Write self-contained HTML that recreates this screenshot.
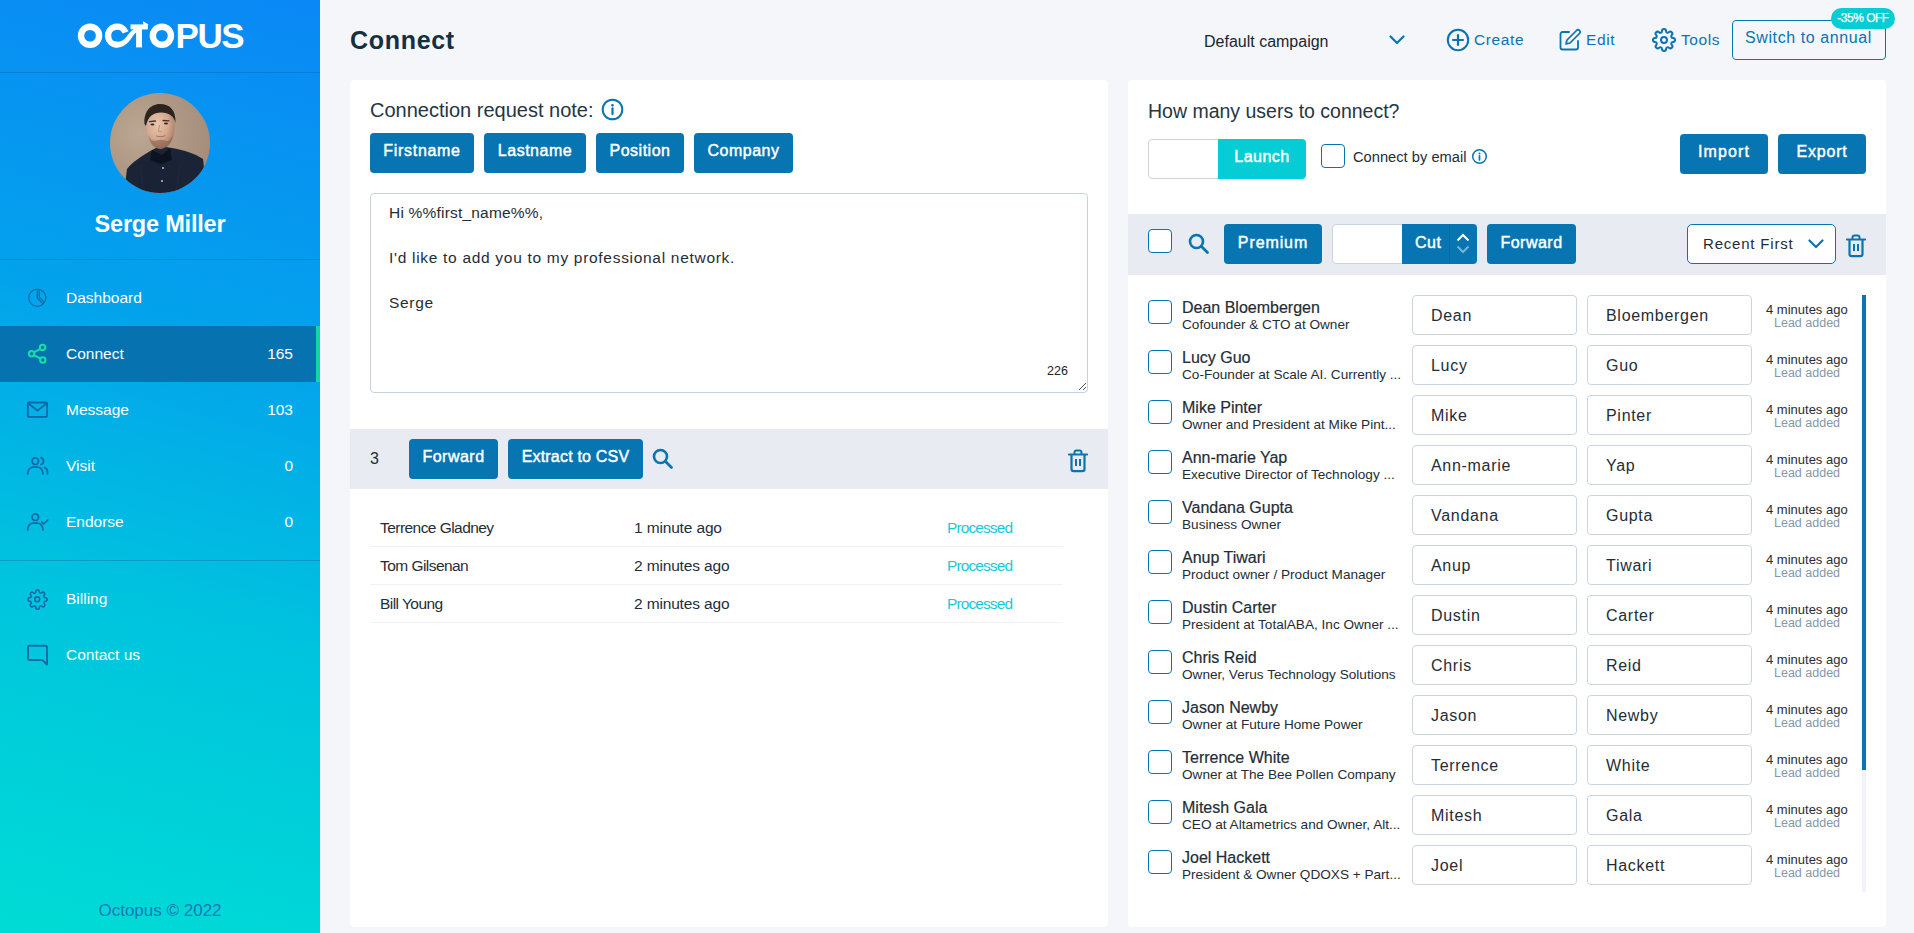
<!DOCTYPE html>
<html><head><meta charset="utf-8">
<style>
*{box-sizing:border-box;margin:0;padding:0}
html,body{width:1914px;height:933px;overflow:hidden;background:#f4f6fa;font-family:"Liberation Sans",sans-serif;color:#1e2a33}
.a{position:absolute}
.t{position:absolute;white-space:nowrap;line-height:1}
#side{position:absolute;left:0;top:0;width:320px;height:933px;background:linear-gradient(195deg,#0a88f6 0%,#03a2ec 35%,#00c4de 65%,#00dcd5 100%);overflow:hidden}
.hr{position:absolute;left:0;width:320px;height:1px;background:rgba(10,90,150,.35)}
.mi{position:absolute;left:0;width:320px;height:56px}
.mi .lbl{position:absolute;left:66px;top:0;line-height:56px;font-size:15.5px;color:#fff}
.mi .cnt{position:absolute;right:27px;top:0;line-height:56px;font-size:15.5px;color:#fff}
.mi svg{position:absolute;left:27px;top:18px}
.btn{position:absolute;background:#0675b1;border-radius:4px;color:#fff;font-weight:400;font-size:16px;-webkit-text-stroke:.45px #fff;text-align:center;height:40px;line-height:36px;letter-spacing:.5px}
.card{position:absolute;background:#fff;border-radius:4px}
.inp{position:absolute;background:#fff;border:1px solid #c9d6de;border-radius:4px}
.chk{position:absolute;width:24px;height:24px;border:1.5px solid #0a74b0;border-radius:4px;background:#fff}
</style></head><body>

<div id="side">
  <svg class="a" style="left:70px;top:15px" width="180" height="40" viewBox="0 0 180 40">
<circle cx="20.05" cy="20.75" r="9.05" fill="none" stroke="#fff" stroke-width="6.4"/>
<path d="M55.6 17.4 A9.1 9.1 0 1 0 47 29.8" fill="none" stroke="#fff" stroke-width="6.4"/>
<path d="M46.5 32.75 C53 32.75 57 29 60.5 24.5 C63.5 20.5 66.5 15.5 72 14.3 L77 14.3 L77 11.8 L70 11.8 C64 12.5 60.5 16.5 57 21 C54 25 51.5 26.85 46.5 26.85 Z" fill="#fff"/>
<rect x="60.5" y="9.4" width="17.4" height="4.9" fill="#fff"/>
<rect x="66.1" y="13" width="5.9" height="19.4" fill="#fff"/>
<path d="M73 6.2 L78.6 9.6 L73.6 11.5 Z" fill="#fff"/>
<circle cx="91.9" cy="20.75" r="9.05" fill="none" stroke="#fff" stroke-width="6.4"/>
<text x="105.6" y="32.8" font-family="Liberation Sans" font-weight="700" font-size="35" fill="#fff" letter-spacing="-1.5">PUS</text>
</svg>
  <div class="hr" style="top:72px"></div>
  <svg class="a" style="left:110px;top:93px" width="100" height="100" viewBox="0 0 100 100">
<defs><clipPath id="av"><circle cx="50" cy="50" r="50"/></clipPath>
<radialGradient id="bgg" cx="30%" cy="40%" r="80%"><stop offset="0" stop-color="#bba793"/><stop offset="1" stop-color="#a28a77"/></radialGradient>
<radialGradient id="face" cx="40%" cy="38%" r="65%"><stop offset="0" stop-color="#e9c6b0"/><stop offset=".6" stop-color="#d4a88f"/><stop offset="1" stop-color="#a87c66"/></radialGradient></defs>
<g clip-path="url(#av)">
<rect width="100" height="100" fill="url(#bgg)"/>
<path d="M14 100 L17 76 C22 69 32 63 42 57 L50 53 L62 55 C73 57 84 60 93 66 L97 100 Z" fill="#1a2436"/>
<path d="M36 32 C36 21 42 16 49.5 16 C58 16 63.5 21 64.5 31 C65.5 43 61 53 51 56 C42 56 37 47 36 32 Z" fill="url(#face)"/>
<path d="M34.5 31 C33.5 17 42 11 50 11 C60 11 66 17 65.5 30 C64 23 59 19.5 51 19.5 C43.5 19.5 38 23 36 33 Z" fill="#2e241f"/>
<path d="M38.5 42 C40 51 45 56 51 56.5 C57 56 61.5 51 63 42 C61 47 58 49.5 55 47.5 C52 46.5 49 46.5 46 47.5 C43 49 40 47 38.5 42Z" fill="#7a5646" opacity=".5"/>
<path d="M39.5 28.6 L45.5 28 M53 27.5 L59 27.8" stroke="#4a3428" stroke-width="1.3" stroke-linecap="round"/>
<ellipse cx="42.5" cy="31.5" rx="2" ry="1" fill="#3b2a22"/><ellipse cx="56" cy="30.6" rx="2" ry="1" fill="#3b2a22"/>
<path d="M49.5 32 L48.5 38.5 L52 38.8" fill="none" stroke="#b88a72" stroke-width=".8"/>
<path d="M46.5 43 C49 44 52 44 55 42.8" fill="none" stroke="#9a6a58" stroke-width=".9" stroke-linecap="round"/>
<path d="M42 57 L52 62 L60 55 L62 67 L51 71 L40 67Z" fill="#0c131e"/>
<path d="M30 72 L34 100 M70 70 L66 100" stroke="#26334a" stroke-width=".6" opacity=".6"/>
<circle cx="53" cy="75" r=".9" fill="#cfd6e0"/><circle cx="52" cy="88" r=".9" fill="#cfd6e0"/>
</g></svg>
  <div class="t" style="left:0;width:320px;text-align:center;top:213px;font-size:23.5px;font-weight:700;color:#fff;letter-spacing:-.2px">Serge Miller</div>
  <div class="hr" style="top:259px"></div>

  <div class="mi" style="top:270px"><span class="lbl">Dashboard</span></div>
  <div class="mi" style="top:326px;background:#0673b0"><span class="lbl">Connect</span><span class="cnt">165</span><div class="a" style="right:0;top:0;width:4px;height:56px;background:#12d6a8"></div></div>
  <div class="mi" style="top:382px"><span class="lbl">Message</span><span class="cnt">103</span></div>
  <div class="mi" style="top:438px"><span class="lbl">Visit</span><span class="cnt">0</span></div>
  <div class="mi" style="top:494px"><span class="lbl">Endorse</span><span class="cnt">0</span></div>
  <div class="hr" style="top:560px"></div>
  <div class="mi" style="top:571px"><span class="lbl">Billing</span></div>
  <div class="mi" style="top:627px"><span class="lbl">Contact us</span></div>
  <svg class="a" style="left:27px;top:288px" width="21" height="21" viewBox="0 0 21 21"><circle cx="10.3" cy="9.8" r="8.6" fill="none" stroke="#0b69a8" stroke-width="1.2"/><path d="M10.3 1.2V10L16 15.8" fill="none" stroke="#0b69a8" stroke-width="1.2"/><path d="M12.3 1.4V9.3L17.3 14.3" fill="none" stroke="#0b69a8" stroke-width="1.2"/></svg>
  <svg class="a" style="left:26px;top:343px" width="22" height="22" viewBox="0 0 22 22"><circle cx="16.6" cy="4.5" r="2.7" fill="none" stroke="#17dfa9" stroke-width="2"/><circle cx="5.6" cy="10.7" r="2.7" fill="none" stroke="#17dfa9" stroke-width="2"/><circle cx="16.8" cy="17" r="2.7" fill="none" stroke="#17dfa9" stroke-width="2"/><path d="M8 9.3l6.3-3.5M8 12.1l6.4 3.6" stroke="#17dfa9" stroke-width="2"/></svg>
  <svg class="a" style="left:26px;top:400px" width="23" height="19" viewBox="0 0 23 19"><rect x="1.8" y="2.5" width="19.3" height="14.3" rx="1.3" fill="none" stroke="#0b69a8" stroke-width="1.8"/><path d="M2.5 3.5l9 7 9-7" fill="none" stroke="#0b69a8" stroke-width="1.8"/></svg>
  <svg class="a" style="left:26px;top:455px" width="24" height="22" viewBox="0 0 24 22"><circle cx="9.3" cy="6.2" r="3.3" fill="none" stroke="#0b69a8" stroke-width="1.7"/><path d="M1.8 19v-1.3a5.5 5.5 0 0 1 5.5-5.5h4a5.5 5.5 0 0 1 5.5 5.5V19" fill="none" stroke="#0b69a8" stroke-width="1.7" stroke-linecap="round"/><path d="M15 2.8a3.5 3.5 0 0 1 0 6.7" fill="none" stroke="#0b69a8" stroke-width="1.7" stroke-linecap="round"/><path d="M18.5 12.5a5 5 0 0 1 3 4.6V19" fill="none" stroke="#0b69a8" stroke-width="1.7" stroke-linecap="round"/></svg>
  <svg class="a" style="left:26px;top:511px" width="24" height="22" viewBox="0 0 24 22"><circle cx="9.3" cy="6.2" r="3.3" fill="none" stroke="#0b69a8" stroke-width="1.7"/><path d="M1.8 19v-1.3a5.5 5.5 0 0 1 5.5-5.5h4a5.5 5.5 0 0 1 5.5 5.5V19" fill="none" stroke="#0b69a8" stroke-width="1.7" stroke-linecap="round"/><path d="M15.8 11l2 2 4-4" fill="none" stroke="#0b69a8" stroke-width="1.7" stroke-linecap="round" stroke-linejoin="round"/></svg>
  <svg class="a" style="left:27px;top:589px" width="21" height="21" viewBox="0 0 24 24"><circle cx="11.7" cy="11.8" r="2.8" fill="none" stroke="#0b69a8" stroke-width="1.8"/><path d="M19.4 15a1.65 1.65 0 0 0 .33 1.82l.06.06a2 2 0 0 1-2.83 2.83l-.06-.06a1.65 1.65 0 0 0-1.820-.33 1.65 1.65 0 0 0-1 1.51V21a2 2 0 0 1-4 0v-.09A1.65 1.65 0 0 0 9 19.4a1.65 1.65 0 0 0-1.82.33l-.06.06a2 2 0 0 1-2.83-2.83l.06-.06A1.65 1.65 0 0 0 4.68 15a1.65 1.65 0 0 0-1.51-1H3a2 2 0 0 1 0-4h.09A1.65 1.65 0 0 0 4.6 9a1.65 1.65 0 0 0-.33-1.82l-.06-.06a2 2 0 0 1 2.83-2.83l.06.06A1.65 1.65 0 0 0 9 4.68a1.65 1.65 0 0 0 1-1.51V3a2 2 0 0 1 4 0v.09a1.65 1.65 0 0 0 1 1.51 1.65 1.65 0 0 0 1.82-.33l.06-.06a2 2 0 0 1 2.83 2.83l-.06.06A1.65 1.65 0 0 0 19.4 9a1.65 1.65 0 0 0 1.51 1H21a2 2 0 0 1 0 4h-.09a1.65 1.65 0 0 0-1.51 1z" fill="none" stroke="#0b69a8" stroke-width="1.8"/></svg>
  <svg class="a" style="left:26px;top:644px" width="23" height="22" viewBox="0 0 23 22"><path d="M3.5 1.8h16a1.5 1.5 0 0 1 1.5 1.5V20.5L16.3 16H3.5A1.5 1.5 0 0 1 2 14.5V3.3A1.5 1.5 0 0 1 3.5 1.8z" fill="none" stroke="#0b69a8" stroke-width="1.9" stroke-linejoin="round"/></svg>
  <div class="t" style="left:0;width:320px;text-align:center;top:902px;font-size:17px;color:#1878b6">Octopus © 2022</div>
</div>

<!-- header -->
<div class="t" style="left:350px;top:28px;font-size:25px;font-weight:700;color:#15303f;letter-spacing:.7px">Connect</div>


<div class="t" style="left:1204px;top:34px;font-size:16px;color:#1b2530">Default campaign</div>
<svg class="a" style="left:1389px;top:35px" width="16" height="10" viewBox="0 0 16 10"><path d="M1.5 1.5 L8 8 L14.5 1.5" fill="none" stroke="#0a74b0" stroke-width="2.2" stroke-linecap="round" stroke-linejoin="round"/></svg>
<svg class="a" style="left:1446px;top:28px" width="24" height="24" viewBox="0 0 24 24"><circle cx="12" cy="12" r="10.2" fill="none" stroke="#0a74b0" stroke-width="2"/><path d="M12 7v10M7 12h10" stroke="#0a74b0" stroke-width="2.2" stroke-linecap="round"/></svg>
<div class="t" style="left:1474px;top:32px;font-size:15.5px;color:#0a74b0;letter-spacing:.6px">Create</div>
<svg class="a" style="left:1558px;top:28px" width="24" height="24" viewBox="0 0 24 24"><path d="M11 4H4.5a2 2 0 0 0-2 2v13.5a2 2 0 0 0 2 2H18a2 2 0 0 0 2-2V13" fill="none" stroke="#0a74b0" stroke-width="1.8" stroke-linecap="round"/><path d="M18.5 2.5a2.1 2.1 0 0 1 3 3L12 15l-4 1 1-4z" fill="none" stroke="#0a74b0" stroke-width="1.7" stroke-linejoin="round"/></svg>
<div class="t" style="left:1586px;top:32px;font-size:15.5px;color:#0a74b0;letter-spacing:.6px">Edit</div>
<svg class="a" style="left:1652px;top:28px" width="24" height="24" viewBox="0 0 24 24"><circle cx="12" cy="12" r="3" fill="none" stroke="#0a74b0" stroke-width="2"/><path d="M19.4 15a1.65 1.65 0 0 0 .33 1.82l.06.06a2 2 0 0 1-2.83 2.83l-.06-.06a1.65 1.65 0 0 0-1.82-.33 1.65 1.65 0 0 0-1 1.51V21a2 2 0 0 1-4 0v-.09A1.65 1.65 0 0 0 9 19.4a1.65 1.65 0 0 0-1.82.33l-.06.06a2 2 0 0 1-2.83-2.830l.06-.06A1.65 1.65 0 0 0 4.68 15a1.65 1.65 0 0 0-1.510-1H3a2 2 0 0 1 0-4h.09A1.65 1.65 0 0 0 4.600 9a1.65 1.65 0 0 0-.33-1.82l-.06-.06a2 2 0 0 1 2.83-2.83l.06.06A1.65 1.65 0 0 0 9 4.68a1.65 1.65 0 0 0 1-1.51V3a2 2 0 0 1 4 0v.09a1.65 1.65 0 0 0 1 1.51 1.65 1.65 0 0 0 1.82-.33l.06-.06a2 2 0 0 1 2.83 2.83l-.06.06A1.65 1.65 0 0 0 19.4 9a1.65 1.65 0 0 0 1.51 1H21a2 2 0 0 1 0 4h-.09a1.65 1.65 0 0 0-1.51 1z" fill="none" stroke="#0a74b0" stroke-width="2"/></svg>
<div class="t" style="left:1681px;top:32px;font-size:15.5px;color:#0a74b0;letter-spacing:.6px">Tools</div>
<div class="a" style="left:1732px;top:20px;width:154px;height:40px;border:1.5px solid #0a74b0;border-radius:4px"></div>
<div class="t" style="left:1745px;top:30px;font-size:16px;color:#0a74b0;letter-spacing:.6px">Switch to annual</div>
<div class="a" style="left:1831px;top:8px;width:64px;height:21px;border-radius:11px;background:#06ccd4;color:#fff;font-size:12px;line-height:21px;text-align:center;letter-spacing:-.5px;-webkit-text-stroke:.25px #fff">-35% OFF</div>

<!-- LEFT CARD -->
<div class="card" style="left:350px;top:80px;width:758px;height:847px"></div>


<div class="t" style="left:370px;top:100px;font-size:20px;color:#26353f">Connection request note:</div>
<svg class="a" style="left:601px;top:98px" width="23" height="23" viewBox="0 0 23 23"><circle cx="11.5" cy="11.5" r="9.8" fill="none" stroke="#0a74b0" stroke-width="2"/><circle cx="11.5" cy="7.3" r="1.3" fill="#0a74b0"/><path d="M11.5 10.3v5.8" stroke="#0a74b0" stroke-width="2.2" stroke-linecap="round"/></svg>
<div class="btn" style="left:370px;top:133px;width:104px;letter-spacing:.7px">Firstname</div>
<div class="btn" style="left:484px;top:133px;width:102px">Lastname</div>
<div class="btn" style="left:596px;top:133px;width:88px">Position</div>
<div class="btn" style="left:694px;top:133px;width:99px">Company</div>
<div class="inp" style="left:370px;top:193px;width:718px;height:200px;border-color:#c6d3dc"></div>
<div class="t" style="left:389px;top:205px;font-size:15.5px;color:#1f2d36;letter-spacing:.2px">Hi %%first_name%%,</div>
<div class="t" style="left:389px;top:250px;font-size:15.5px;color:#1f2d36;letter-spacing:.7px">I'd like to add you to my professional network.</div>
<div class="t" style="left:389px;top:295px;font-size:15.5px;color:#1f2d36;letter-spacing:.7px">Serge</div>
<div class="t" style="left:1047px;top:365px;font-size:12.5px;color:#222">226</div>
<svg class="a" style="left:1077px;top:381px" width="10" height="10" viewBox="0 0 10 10"><path d="M9 2L2 9M9 6L6 9" stroke="#555" stroke-width="1"/></svg>

<div class="a" style="left:350px;top:429px;width:758px;height:60px;background:#e8ebf2"></div>
<div class="t" style="left:370px;top:451px;font-size:16px;color:#1f2d36">3</div>
<div class="btn" style="left:409px;top:439px;width:89px">Forward</div>
<div class="btn" style="left:508px;top:439px;width:135px;letter-spacing:.2px">Extract to CSV</div>
<svg class="a" style="left:651px;top:447px" width="24" height="24" viewBox="0 0 24 24"><circle cx="9.5" cy="9.5" r="6.5" fill="none" stroke="#0a74b0" stroke-width="2.6"/><path d="M14.5 14.5L20.5 20.5" stroke="#0a74b0" stroke-width="2.8" stroke-linecap="round"/></svg>
<svg class="a" style="left:1066px;top:448px" width="24" height="26" viewBox="0 0 24 26"><path d="M3 6.5h18" stroke="#0a74b0" stroke-width="2.2" stroke-linecap="round"/><path d="M8.5 6V4.5a2 2 0 0 1 2-2h3a2 2 0 0 1 2 2V6" fill="none" stroke="#0a74b0" stroke-width="2"/><path d="M5.5 7v14a2.2 2.2 0 0 0 2.2 2.2h8.6a2.2 2.2 0 0 0 2.2-2.2V7" fill="none" stroke="#0a74b0" stroke-width="2.2"/><path d="M10 11v7M14 11v7" stroke="#0a74b0" stroke-width="2"/></svg>

<div class="t" style="left:380px;top:520px;font-size:15.5px;color:#1f2d36;letter-spacing:-.55px">Terrence Gladney</div>
<div class="t" style="left:634px;top:520px;font-size:15.5px;color:#1f2d36;letter-spacing:-.15px">1 minute ago</div>
<div class="t" style="left:947px;top:520px;font-size:15.5px;color:#1bc8d8;letter-spacing:-.9px">Processed</div>
<div class="a" style="left:370px;top:546px;width:693px;height:1px;background:#f0f2f6"></div>
<div class="t" style="left:380px;top:558px;font-size:15.5px;color:#1f2d36;letter-spacing:-.55px">Tom Gilsenan</div>
<div class="t" style="left:634px;top:558px;font-size:15.5px;color:#1f2d36;letter-spacing:-.15px">2 minutes ago</div>
<div class="t" style="left:947px;top:558px;font-size:15.5px;color:#1bc8d8;letter-spacing:-.9px">Processed</div>
<div class="a" style="left:370px;top:584px;width:693px;height:1px;background:#f0f2f6"></div>
<div class="t" style="left:380px;top:596px;font-size:15.5px;color:#1f2d36;letter-spacing:-.55px">Bill Young</div>
<div class="t" style="left:634px;top:596px;font-size:15.5px;color:#1f2d36;letter-spacing:-.15px">2 minutes ago</div>
<div class="t" style="left:947px;top:596px;font-size:15.5px;color:#1bc8d8;letter-spacing:-.9px">Processed</div>
<div class="a" style="left:370px;top:622px;width:693px;height:1px;background:#f0f2f6"></div>

<!-- RIGHT CARD -->
<div class="card" style="left:1128px;top:80px;width:758px;height:847px"></div>


<div class="t" style="left:1148px;top:102px;font-size:19.5px;color:#26353f">How many users to connect?</div>
<div class="inp" style="left:1148px;top:139px;width:74px;height:40px;border-radius:4px 0 0 4px"></div>
<div class="a" style="left:1218px;top:139px;width:88px;height:40px;background:#06cdd5;border-radius:0 4px 4px 0;color:#fff;font-size:16px;-webkit-text-stroke:.45px #fff;line-height:36px;text-align:center;letter-spacing:.5px">Launch</div>
<div class="chk" style="left:1321px;top:144px"></div>
<div class="t" style="left:1353px;top:150px;font-size:14.7px;color:#1f2d36">Connect by email</div>
<svg class="a" style="left:1471px;top:148px" width="17" height="17" viewBox="0 0 17 17"><circle cx="8.5" cy="8.5" r="6.8" fill="none" stroke="#0a74b0" stroke-width="1.5"/><circle cx="8.5" cy="5.6" r="1" fill="#0a74b0"/><path d="M8.5 7.8v4.2" stroke="#0a74b0" stroke-width="1.7" stroke-linecap="round"/></svg>
<div class="btn" style="left:1680px;top:134px;width:88px;line-height:36px;letter-spacing:1.1px">Import</div>
<div class="btn" style="left:1778px;top:134px;width:88px;line-height:36px;letter-spacing:.8px">Export</div>

<div class="a" style="left:1128px;top:214px;width:758px;height:61px;background:#e8ebf2"></div>
<div class="chk" style="left:1148px;top:229px"></div>
<svg class="a" style="left:1187px;top:232px" width="24" height="24" viewBox="0 0 24 24"><circle cx="9.5" cy="9.5" r="6.5" fill="none" stroke="#0a74b0" stroke-width="2.6"/><path d="M14.5 14.5L20.5 20.5" stroke="#0a74b0" stroke-width="2.8" stroke-linecap="round"/></svg>
<div class="btn" style="left:1224px;top:224px;width:98px;line-height:37px;letter-spacing:.9px">Premium</div>
<div class="inp" style="left:1332px;top:224px;width:74px;height:40px;border-radius:4px 0 0 4px"></div>
<div class="a" style="left:1402px;top:224px;width:75px;height:40px;background:#0675b1;border-radius:0 4px 4px 0"></div>
<div class="a" style="left:1449px;top:224px;width:1px;height:40px;background:rgba(0,0,0,.07)"></div>
<div class="t" style="left:1415px;top:235px;font-size:16px;color:#fff;-webkit-text-stroke:.45px #fff;letter-spacing:.5px">Cut</div>
<svg class="a" style="left:1455px;top:232px" width="16" height="23" viewBox="0 0 16 23"><path d="M2.5 8.5L8 3l5.5 5.5" fill="none" stroke="#fff" stroke-width="2"/><path d="M2.5 14.5L8 20l5.5-5.5" fill="none" stroke="rgba(255,255,255,.45)" stroke-width="2"/></svg>
<div class="btn" style="left:1487px;top:224px;width:89px;line-height:37px">Forward</div>
<div class="a" style="left:1687px;top:224px;width:149px;height:40px;border:1.5px solid #0a74b0;border-radius:5px;background:#fff"></div>
<div class="t" style="left:1703px;top:236px;font-size:15px;color:#1f2d36;letter-spacing:.8px">Recent First</div>
<svg class="a" style="left:1808px;top:239px" width="16" height="10" viewBox="0 0 16 10"><path d="M1.5 1.5L8 8l6.5-6.5" fill="none" stroke="#0a74b0" stroke-width="2.2" stroke-linecap="round" stroke-linejoin="round"/></svg>
<svg class="a" style="left:1844px;top:233px" width="24" height="26" viewBox="0 0 24 26"><path d="M3 6.5h18" stroke="#0a74b0" stroke-width="2.2" stroke-linecap="round"/><path d="M8.5 6V4.5a2 2 0 0 1 2-2h3a2 2 0 0 1 2 2V6" fill="none" stroke="#0a74b0" stroke-width="2"/><path d="M5.5 7v14a2.2 2.2 0 0 0 2.2 2.2h8.6a2.2 2.2 0 0 0 2.2-2.2V7" fill="none" stroke="#0a74b0" stroke-width="2.2"/><path d="M10 11v7M14 11v7" stroke="#0a74b0" stroke-width="2"/></svg>

<div class="a" style="left:1862px;top:295px;width:4px;height:597px;background:#f1f3f8"></div>
<div class="a" style="left:1862px;top:295px;width:4px;height:475px;background:#0a74b0"></div>
<div class="chk" style="left:1148px;top:300px"></div>
<div class="t" style="left:1182px;top:300px;font-size:16px;color:#1f2d36;-webkit-text-stroke:.2px #1f2d36">Dean Bloembergen</div>
<div class="t" style="left:1182px;top:318px;font-size:13.6px;color:#1f2d36">Cofounder &amp; CTO at Owner</div>
<div class="inp" style="left:1412px;top:295px;width:165px;height:40px"></div>
<div class="t" style="left:1431px;top:308px;font-size:16px;color:#1f2d36;letter-spacing:.7px">Dean</div>
<div class="inp" style="left:1587px;top:295px;width:165px;height:40px"></div>
<div class="t" style="left:1606px;top:308px;font-size:16px;color:#1f2d36;letter-spacing:.7px">Bloembergen</div>
<div class="t" style="left:1766px;top:303px;font-size:13px;color:#1f2d36">4 minutes ago</div>
<div class="t" style="left:1774px;top:317px;font-size:12.5px;color:#8797a5">Lead added</div>
<div class="chk" style="left:1148px;top:350px"></div>
<div class="t" style="left:1182px;top:350px;font-size:16px;color:#1f2d36;-webkit-text-stroke:.2px #1f2d36">Lucy Guo</div>
<div class="t" style="left:1182px;top:368px;font-size:13.6px;color:#1f2d36">Co-Founder at Scale AI. Currently ...</div>
<div class="inp" style="left:1412px;top:345px;width:165px;height:40px"></div>
<div class="t" style="left:1431px;top:358px;font-size:16px;color:#1f2d36;letter-spacing:.7px">Lucy</div>
<div class="inp" style="left:1587px;top:345px;width:165px;height:40px"></div>
<div class="t" style="left:1606px;top:358px;font-size:16px;color:#1f2d36;letter-spacing:.7px">Guo</div>
<div class="t" style="left:1766px;top:353px;font-size:13px;color:#1f2d36">4 minutes ago</div>
<div class="t" style="left:1774px;top:367px;font-size:12.5px;color:#8797a5">Lead added</div>
<div class="chk" style="left:1148px;top:400px"></div>
<div class="t" style="left:1182px;top:400px;font-size:16px;color:#1f2d36;-webkit-text-stroke:.2px #1f2d36">Mike Pinter</div>
<div class="t" style="left:1182px;top:418px;font-size:13.6px;color:#1f2d36">Owner and President at Mike Pint...</div>
<div class="inp" style="left:1412px;top:395px;width:165px;height:40px"></div>
<div class="t" style="left:1431px;top:408px;font-size:16px;color:#1f2d36;letter-spacing:.7px">Mike</div>
<div class="inp" style="left:1587px;top:395px;width:165px;height:40px"></div>
<div class="t" style="left:1606px;top:408px;font-size:16px;color:#1f2d36;letter-spacing:.7px">Pinter</div>
<div class="t" style="left:1766px;top:403px;font-size:13px;color:#1f2d36">4 minutes ago</div>
<div class="t" style="left:1774px;top:417px;font-size:12.5px;color:#8797a5">Lead added</div>
<div class="chk" style="left:1148px;top:450px"></div>
<div class="t" style="left:1182px;top:450px;font-size:16px;color:#1f2d36;-webkit-text-stroke:.2px #1f2d36">Ann-marie Yap</div>
<div class="t" style="left:1182px;top:468px;font-size:13.6px;color:#1f2d36">Executive Director of Technology ...</div>
<div class="inp" style="left:1412px;top:445px;width:165px;height:40px"></div>
<div class="t" style="left:1431px;top:458px;font-size:16px;color:#1f2d36;letter-spacing:.7px">Ann-marie</div>
<div class="inp" style="left:1587px;top:445px;width:165px;height:40px"></div>
<div class="t" style="left:1606px;top:458px;font-size:16px;color:#1f2d36;letter-spacing:.7px">Yap</div>
<div class="t" style="left:1766px;top:453px;font-size:13px;color:#1f2d36">4 minutes ago</div>
<div class="t" style="left:1774px;top:467px;font-size:12.5px;color:#8797a5">Lead added</div>
<div class="chk" style="left:1148px;top:500px"></div>
<div class="t" style="left:1182px;top:500px;font-size:16px;color:#1f2d36;-webkit-text-stroke:.2px #1f2d36">Vandana Gupta</div>
<div class="t" style="left:1182px;top:518px;font-size:13.6px;color:#1f2d36">Business Owner</div>
<div class="inp" style="left:1412px;top:495px;width:165px;height:40px"></div>
<div class="t" style="left:1431px;top:508px;font-size:16px;color:#1f2d36;letter-spacing:.7px">Vandana</div>
<div class="inp" style="left:1587px;top:495px;width:165px;height:40px"></div>
<div class="t" style="left:1606px;top:508px;font-size:16px;color:#1f2d36;letter-spacing:.7px">Gupta</div>
<div class="t" style="left:1766px;top:503px;font-size:13px;color:#1f2d36">4 minutes ago</div>
<div class="t" style="left:1774px;top:517px;font-size:12.5px;color:#8797a5">Lead added</div>
<div class="chk" style="left:1148px;top:550px"></div>
<div class="t" style="left:1182px;top:550px;font-size:16px;color:#1f2d36;-webkit-text-stroke:.2px #1f2d36">Anup Tiwari</div>
<div class="t" style="left:1182px;top:568px;font-size:13.6px;color:#1f2d36">Product owner / Product Manager</div>
<div class="inp" style="left:1412px;top:545px;width:165px;height:40px"></div>
<div class="t" style="left:1431px;top:558px;font-size:16px;color:#1f2d36;letter-spacing:.7px">Anup</div>
<div class="inp" style="left:1587px;top:545px;width:165px;height:40px"></div>
<div class="t" style="left:1606px;top:558px;font-size:16px;color:#1f2d36;letter-spacing:.7px">Tiwari</div>
<div class="t" style="left:1766px;top:553px;font-size:13px;color:#1f2d36">4 minutes ago</div>
<div class="t" style="left:1774px;top:567px;font-size:12.5px;color:#8797a5">Lead added</div>
<div class="chk" style="left:1148px;top:600px"></div>
<div class="t" style="left:1182px;top:600px;font-size:16px;color:#1f2d36;-webkit-text-stroke:.2px #1f2d36">Dustin Carter</div>
<div class="t" style="left:1182px;top:618px;font-size:13.6px;color:#1f2d36">President at TotalABA, Inc Owner ...</div>
<div class="inp" style="left:1412px;top:595px;width:165px;height:40px"></div>
<div class="t" style="left:1431px;top:608px;font-size:16px;color:#1f2d36;letter-spacing:.7px">Dustin</div>
<div class="inp" style="left:1587px;top:595px;width:165px;height:40px"></div>
<div class="t" style="left:1606px;top:608px;font-size:16px;color:#1f2d36;letter-spacing:.7px">Carter</div>
<div class="t" style="left:1766px;top:603px;font-size:13px;color:#1f2d36">4 minutes ago</div>
<div class="t" style="left:1774px;top:617px;font-size:12.5px;color:#8797a5">Lead added</div>
<div class="chk" style="left:1148px;top:650px"></div>
<div class="t" style="left:1182px;top:650px;font-size:16px;color:#1f2d36;-webkit-text-stroke:.2px #1f2d36">Chris Reid</div>
<div class="t" style="left:1182px;top:668px;font-size:13.6px;color:#1f2d36">Owner, Verus Technology Solutions</div>
<div class="inp" style="left:1412px;top:645px;width:165px;height:40px"></div>
<div class="t" style="left:1431px;top:658px;font-size:16px;color:#1f2d36;letter-spacing:.7px">Chris</div>
<div class="inp" style="left:1587px;top:645px;width:165px;height:40px"></div>
<div class="t" style="left:1606px;top:658px;font-size:16px;color:#1f2d36;letter-spacing:.7px">Reid</div>
<div class="t" style="left:1766px;top:653px;font-size:13px;color:#1f2d36">4 minutes ago</div>
<div class="t" style="left:1774px;top:667px;font-size:12.5px;color:#8797a5">Lead added</div>
<div class="chk" style="left:1148px;top:700px"></div>
<div class="t" style="left:1182px;top:700px;font-size:16px;color:#1f2d36;-webkit-text-stroke:.2px #1f2d36">Jason Newby</div>
<div class="t" style="left:1182px;top:718px;font-size:13.6px;color:#1f2d36">Owner at Future Home Power</div>
<div class="inp" style="left:1412px;top:695px;width:165px;height:40px"></div>
<div class="t" style="left:1431px;top:708px;font-size:16px;color:#1f2d36;letter-spacing:.7px">Jason</div>
<div class="inp" style="left:1587px;top:695px;width:165px;height:40px"></div>
<div class="t" style="left:1606px;top:708px;font-size:16px;color:#1f2d36;letter-spacing:.7px">Newby</div>
<div class="t" style="left:1766px;top:703px;font-size:13px;color:#1f2d36">4 minutes ago</div>
<div class="t" style="left:1774px;top:717px;font-size:12.5px;color:#8797a5">Lead added</div>
<div class="chk" style="left:1148px;top:750px"></div>
<div class="t" style="left:1182px;top:750px;font-size:16px;color:#1f2d36;-webkit-text-stroke:.2px #1f2d36">Terrence White</div>
<div class="t" style="left:1182px;top:768px;font-size:13.6px;color:#1f2d36">Owner at The Bee Pollen Company</div>
<div class="inp" style="left:1412px;top:745px;width:165px;height:40px"></div>
<div class="t" style="left:1431px;top:758px;font-size:16px;color:#1f2d36;letter-spacing:.7px">Terrence</div>
<div class="inp" style="left:1587px;top:745px;width:165px;height:40px"></div>
<div class="t" style="left:1606px;top:758px;font-size:16px;color:#1f2d36;letter-spacing:.7px">White</div>
<div class="t" style="left:1766px;top:753px;font-size:13px;color:#1f2d36">4 minutes ago</div>
<div class="t" style="left:1774px;top:767px;font-size:12.5px;color:#8797a5">Lead added</div>
<div class="chk" style="left:1148px;top:800px"></div>
<div class="t" style="left:1182px;top:800px;font-size:16px;color:#1f2d36;-webkit-text-stroke:.2px #1f2d36">Mitesh Gala</div>
<div class="t" style="left:1182px;top:818px;font-size:13.6px;color:#1f2d36">CEO at Altametrics and Owner, Alt...</div>
<div class="inp" style="left:1412px;top:795px;width:165px;height:40px"></div>
<div class="t" style="left:1431px;top:808px;font-size:16px;color:#1f2d36;letter-spacing:.7px">Mitesh</div>
<div class="inp" style="left:1587px;top:795px;width:165px;height:40px"></div>
<div class="t" style="left:1606px;top:808px;font-size:16px;color:#1f2d36;letter-spacing:.7px">Gala</div>
<div class="t" style="left:1766px;top:803px;font-size:13px;color:#1f2d36">4 minutes ago</div>
<div class="t" style="left:1774px;top:817px;font-size:12.5px;color:#8797a5">Lead added</div>
<div class="chk" style="left:1148px;top:850px"></div>
<div class="t" style="left:1182px;top:850px;font-size:16px;color:#1f2d36;-webkit-text-stroke:.2px #1f2d36">Joel Hackett</div>
<div class="t" style="left:1182px;top:868px;font-size:13.6px;color:#1f2d36">President &amp; Owner QDOXS + Part...</div>
<div class="inp" style="left:1412px;top:845px;width:165px;height:40px"></div>
<div class="t" style="left:1431px;top:858px;font-size:16px;color:#1f2d36;letter-spacing:.7px">Joel</div>
<div class="inp" style="left:1587px;top:845px;width:165px;height:40px"></div>
<div class="t" style="left:1606px;top:858px;font-size:16px;color:#1f2d36;letter-spacing:.7px">Hackett</div>
<div class="t" style="left:1766px;top:853px;font-size:13px;color:#1f2d36">4 minutes ago</div>
<div class="t" style="left:1774px;top:867px;font-size:12.5px;color:#8797a5">Lead added</div>

</body></html>
